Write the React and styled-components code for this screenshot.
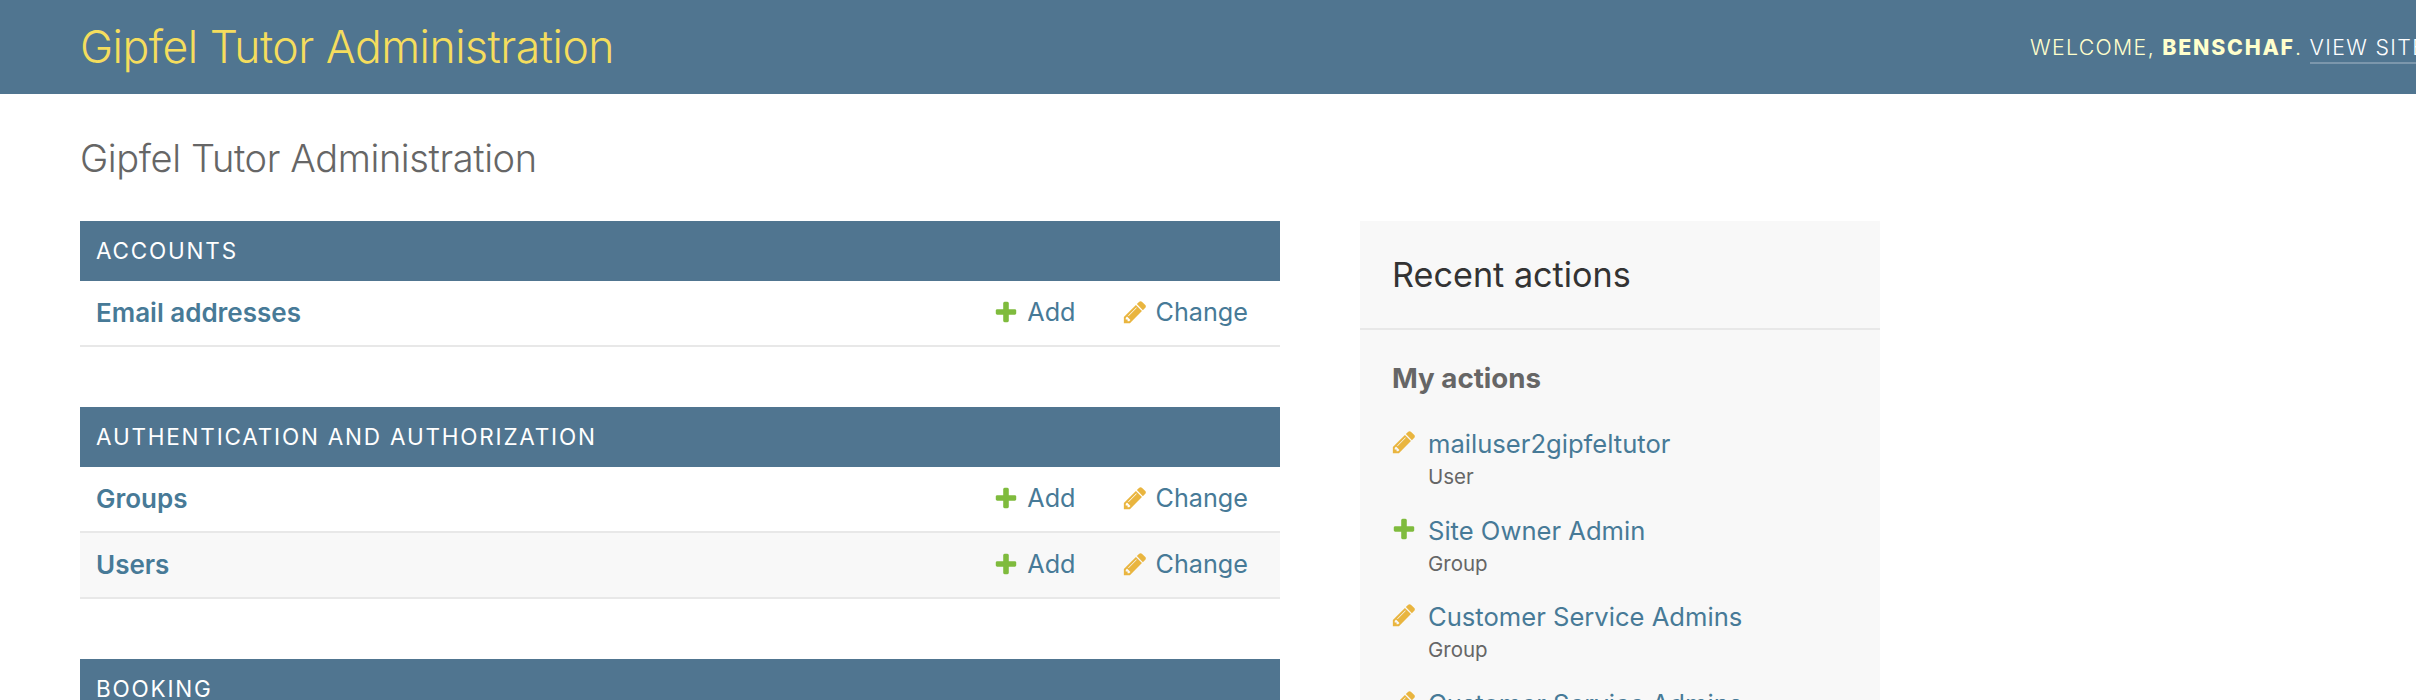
import React from 'react';
import styled, { createGlobalStyle } from 'styled-components';

const GlobalStyle = createGlobalStyle`
  html, body {
    margin: 0;
    height: 700px;
    overflow: hidden;
    background: #fff;
    font-family: Inter, "Liberation Sans", sans-serif;
    color: #333;
  }
  * {
    box-sizing: border-box;
  }
`;

const Header = styled.header`
  display: flex;
  align-items: center;
  justify-content: space-between;
  height: 94px;
  padding-left: 80px;
  background: #507590;
`;

const Brand = styled.div`
  font-size: 44.5px;
  font-weight: 300;
  letter-spacing: -0.5px;
  color: #f5dd5d;
  white-space: nowrap;
`;

const UserTools = styled.div`
  width: 386px;
  overflow: hidden;
  font-size: 21.3px;
  font-weight: 300;
  letter-spacing: 1.35px;
  line-height: 34px;
  color: #ffc;
  white-space: nowrap;
  text-transform: uppercase;

  strong {
    font-weight: 800;
    letter-spacing: 1.8px;
  }
`;

const ViewSite = styled.a`
  color: #fff;
  padding-bottom: 2px;
  border-bottom: 2px solid rgba(255, 255, 255, 0.25);
`;

const Main = styled.main`
  padding: 0 0 0 80px;
`;

const PageTitle = styled.h1`
  margin: 0;
  padding-top: 41px;
  height: 127px;
  font-size: 38px;
  line-height: 46px;
  font-weight: 300;
  letter-spacing: -0.4px;
  color: #666;
`;

const Columns = styled.div`
  display: flex;
  align-items: flex-start;
  gap: 80px;
`;

const ModuleList = styled.div`
  display: flex;
  flex-direction: column;
  gap: 60px;
  width: 1200px;
`;

const Module = styled.section``;

const ModuleTitle = styled.h2`
  margin: 0;
  height: 60px;
  padding: 0 16px;
  font-size: 22.5px;
  line-height: 60px;
  font-weight: 400;
  letter-spacing: 1.8px;
  color: #fff;
  text-transform: uppercase;
  background: #507590;
`;

const Row = styled.div`
  display: flex;
  align-items: center;
  height: 66px;
  padding: 0 32px 2px 16px;
  border-bottom: 2px solid #e8e8e8;
  background: ${props => (props.$alt ? '#f8f8f8' : '#fff')};
`;

const RowName = styled.a`
  flex: 1;
  font-size: 26px;
  font-weight: 600;
  color: #477a97;
`;

const RowAction = styled.a`
  display: flex;
  align-items: center;
  gap: 8px;
  margin-left: ${props => props.$gap || 0}px;
  font-size: 25.2px;
  color: #477a97;
`;

const Panel = styled.aside`
  width: 520px;
  height: 479px;
  overflow: hidden;
  background: #f8f8f8;
`;

const PanelTitle = styled.h2`
  margin: 0;
  height: 109px;
  padding: 0 32px;
  font-size: 34.2px;
  line-height: 107px;
  font-weight: 400;
  color: #333;
  border-bottom: 2px solid #e8e8e8;
`;

const PanelBody = styled.div`
  padding: 0 32px;
`;

const PanelSubtitle = styled.h3`
  margin: 0;
  height: 98px;
  padding-top: 31px;
  font-size: 27.7px;
  line-height: 34px;
  font-weight: 700;
  color: #666;
`;

const ActionList = styled.ul`
  display: flex;
  flex-direction: column;
  margin: 0;
  padding: 0;
  list-style: none;
`;

const ActionItem = styled.li`
  display: grid;
  grid-template-columns: 36px 1fr;
  align-items: center;
  align-content: start;
  height: 86.7px;
`;

const ActionIcon = styled.span`
  display: flex;
  align-items: center;
  height: 32px;
  margin: -4px 0 0 -1px;
`;

const ActionLink = styled.a`
  font-size: 25.6px;
  line-height: 32px;
  color: #477a97;
  white-space: nowrap;
`;

const ActionType = styled.div`
  grid-column: 2;
  margin-top: 4px;
  font-size: 20.5px;
  line-height: 26px;
  color: #666;
`;

const PlusIcon = () => (
  <svg width="26" height="26" viewBox="0 0 1792 1792" aria-hidden="true">
    <path
      fill="#7fbb3d"
      d="M1600 796v192q0 40-28 68t-68 28h-416v416q0 40-28 68t-68 28h-192q-40 0-68-28t-28-68v-416h-416q-40 0-68-28t-28-68v-192q0-40 28-68t68-28h416v-416q0-40 28-68t68-28h192q40 0 68 28t28 68v416h416q40 0 68 28t28 68z"
    />
  </svg>
);

const PencilIcon = () => (
  <svg width="26" height="26" viewBox="0 0 1792 1792" aria-hidden="true">
    <path
      fill="#e9b53f"
      d="M491 1536l91-91-235-235-91 91v107h128v128h107zm523-928q0-22-22-22-10 0-17 7l-542 542q-7 7-7 17 0 22 22 22 10 0 17-7l542-542q7-7 7-17zm-54-192l416 416-832 832h-416v-416zm683 96q0 53-37 90l-166 166-416-416 166-165q36-38 90-38 53 0 91 38l235 234q37 39 37 91z"
    />
  </svg>
);

const modules = [
  { title: 'Accounts', rows: ['Email addresses'] },
  { title: 'Authentication and Authorization', rows: ['Groups', 'Users'] },
  { title: 'Booking', rows: [] },
];

const actions = [
  { kind: 'change', name: 'mailuser2gipfeltutor', type: 'User' },
  { kind: 'add', name: 'Site Owner Admin', type: 'Group' },
  { kind: 'change', name: 'Customer Service Admins', type: 'Group' },
  { kind: 'change', name: 'Customer Service Admins', type: 'Group' },
];

const App = () => (
  <>
    <GlobalStyle />
    <Header>
      <Brand>Gipfel Tutor Administration</Brand>
      <UserTools>
        Welcome, <strong>benschaf</strong>. <ViewSite>View site</ViewSite>
      </UserTools>
    </Header>
    <Main>
      <PageTitle>Gipfel Tutor Administration</PageTitle>
      <Columns>
        <ModuleList>
          {modules.map(module => (
            <Module key={module.title}>
              <ModuleTitle>{module.title}</ModuleTitle>
              {module.rows.map((row, index) => (
                <Row key={row} $alt={index % 2 === 1}>
                  <RowName>{row}</RowName>
                  <RowAction>
                    <PlusIcon />
                    Add
                  </RowAction>
                  <RowAction $gap={46}>
                    <PencilIcon />
                    Change
                  </RowAction>
                </Row>
              ))}
            </Module>
          ))}
        </ModuleList>
        <Panel>
          <PanelTitle>Recent actions</PanelTitle>
          <PanelBody>
            <PanelSubtitle>My actions</PanelSubtitle>
            <ActionList>
              {actions.map((action, index) => (
                <ActionItem key={index}>
                  <ActionIcon>{action.kind === 'add' ? <PlusIcon /> : <PencilIcon />}</ActionIcon>
                  <ActionLink>{action.name}</ActionLink>
                  <ActionType>{action.type}</ActionType>
                </ActionItem>
              ))}
            </ActionList>
          </PanelBody>
        </Panel>
      </Columns>
    </Main>
  </>
);

export default App;
